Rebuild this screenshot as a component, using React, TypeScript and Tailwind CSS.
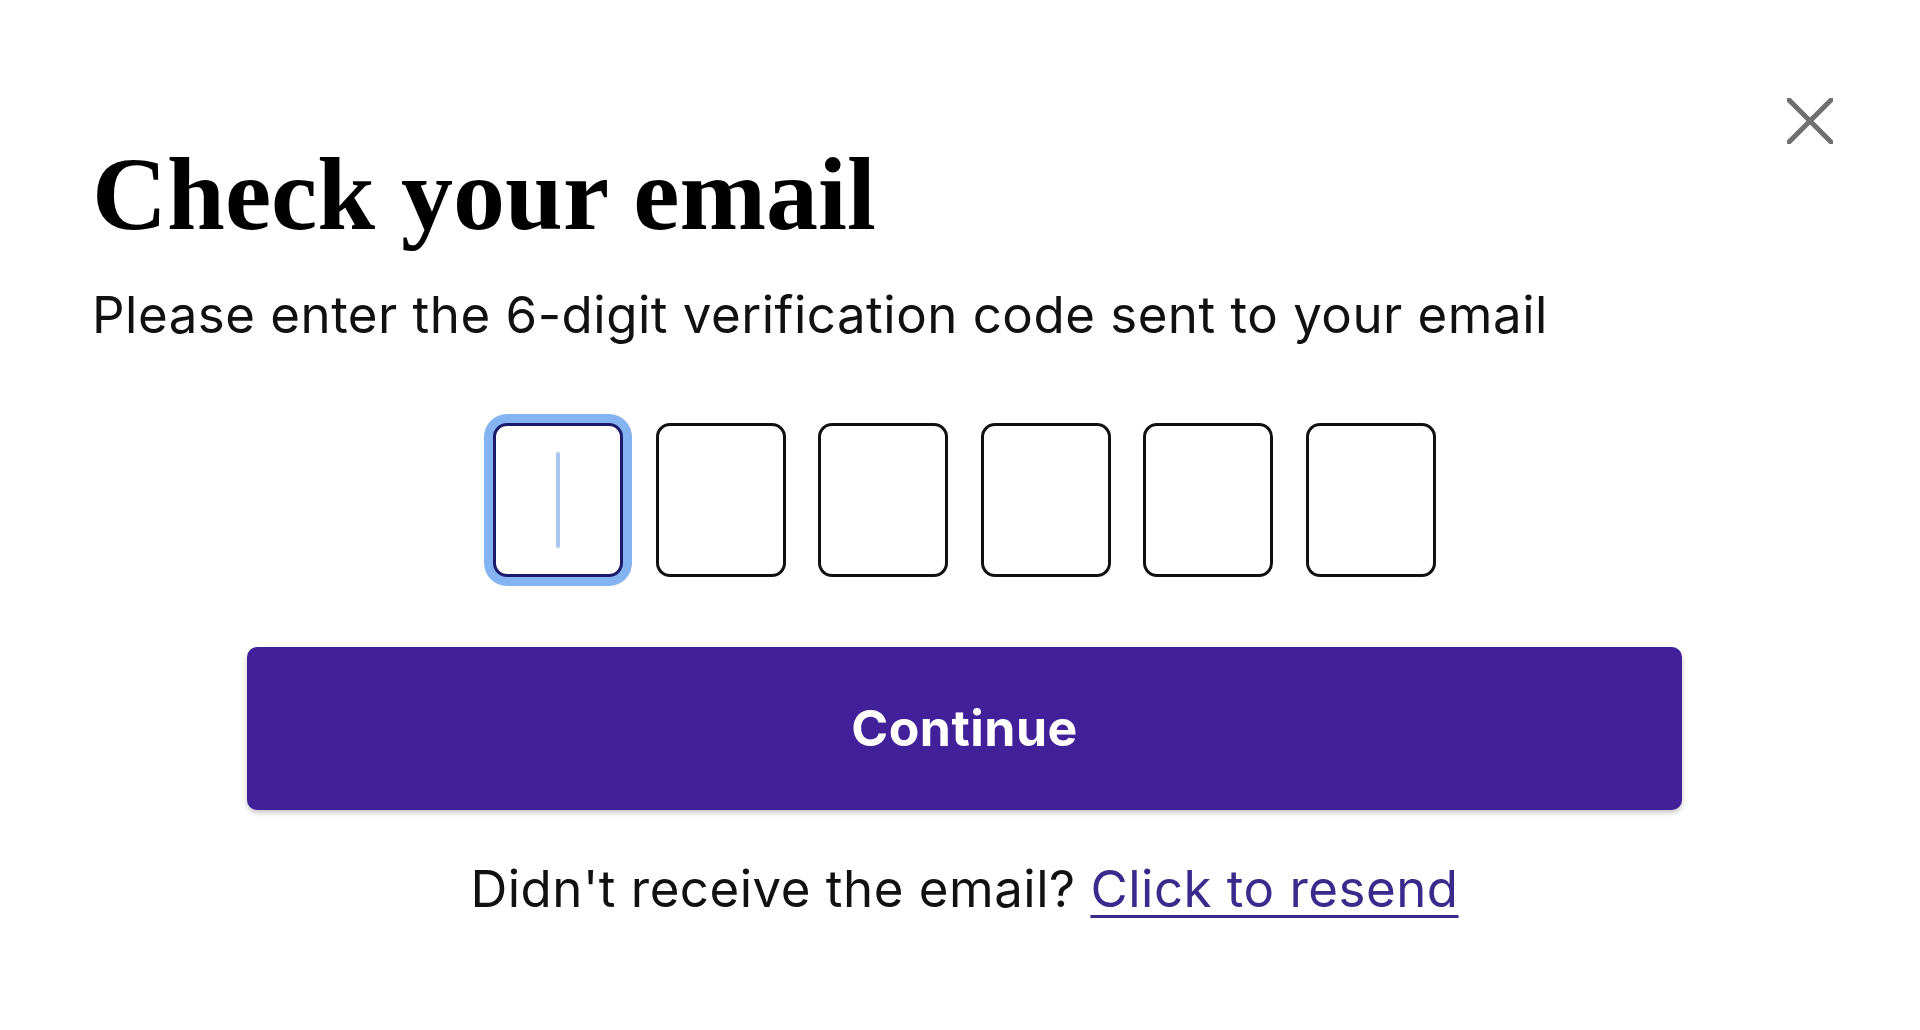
import React from 'react';

const CODE_LENGTH = 6;

function CloseIcon() {
  return (
    <svg width="46" height="46" viewBox="0 0 46 46" fill="none">
      <path
        d="M2 2L44 44M44 2L2 44"
        stroke="#6f6f6f"
        strokeWidth="5"
        strokeLinecap="round"
      />
    </svg>
  );
}

function CodeBox({ focused }: { focused: boolean }) {
  if (focused) {
    return (
      <div className="flex h-[154px] w-[130px] items-center justify-center rounded-[14px] border-[3px] border-[#1d1a6b] bg-white shadow-[0_0_0_9px_#84b3f2]">
        <span className="block h-[96px] w-[4px] rounded-full bg-[#a9c5ee]" />
      </div>
    );
  }
  return <div className="h-[154px] w-[130px] rounded-[14px] border-[3px] border-[#111111] bg-white" />;
}

export default function App() {
  return (
    <div className="relative h-[1030px] w-full bg-white font-['Inter','Liberation_Sans',sans-serif] text-[#111111]">
      {/* Close */}
      <button
        type="button"
        className="absolute right-[87px] top-[98px] flex items-center justify-center"
        aria-label="Close"
      >
        <CloseIcon />
      </button>

      <div className="flex flex-col pl-[92px] pr-[83px] pt-[142px]">
        <h1 className="font-['Liberation_Serif','Times_New_Roman',serif] text-[104px] font-bold leading-none text-black">
          Check your email
        </h1>
        <p className="mt-[43px] text-[51px] leading-none tracking-[0.5px]">
          Please enter the 6-digit verification code sent to your email
        </p>

        {/* Code inputs */}
        <div className="mt-[83px] flex justify-center gap-[32.5px]">
          {Array.from({ length: CODE_LENGTH }).map((_, i) => (
            <CodeBox key={i} focused={i === 0} />
          ))}
        </div>

        <div className="mt-[70px] flex justify-center">
          <button
            type="button"
            className="flex h-[163px] w-[1435px] items-center justify-center rounded-[10px] bg-[#42209a] text-[50px] font-bold tracking-[0.5px] text-white shadow-[0_3px_5px_rgba(0,0,0,0.22)]"
          >
            Continue
          </button>
        </div>

        <p className="mt-[53px] text-center text-[51px] leading-none tracking-[0.5px]">
          Didn't receive the email?{' '}
          <a href="#" className="text-[#3a2a8c] underline decoration-[3px] underline-offset-[8px]">
            Click to resend
          </a>
        </p>
      </div>
    </div>
  );
}
